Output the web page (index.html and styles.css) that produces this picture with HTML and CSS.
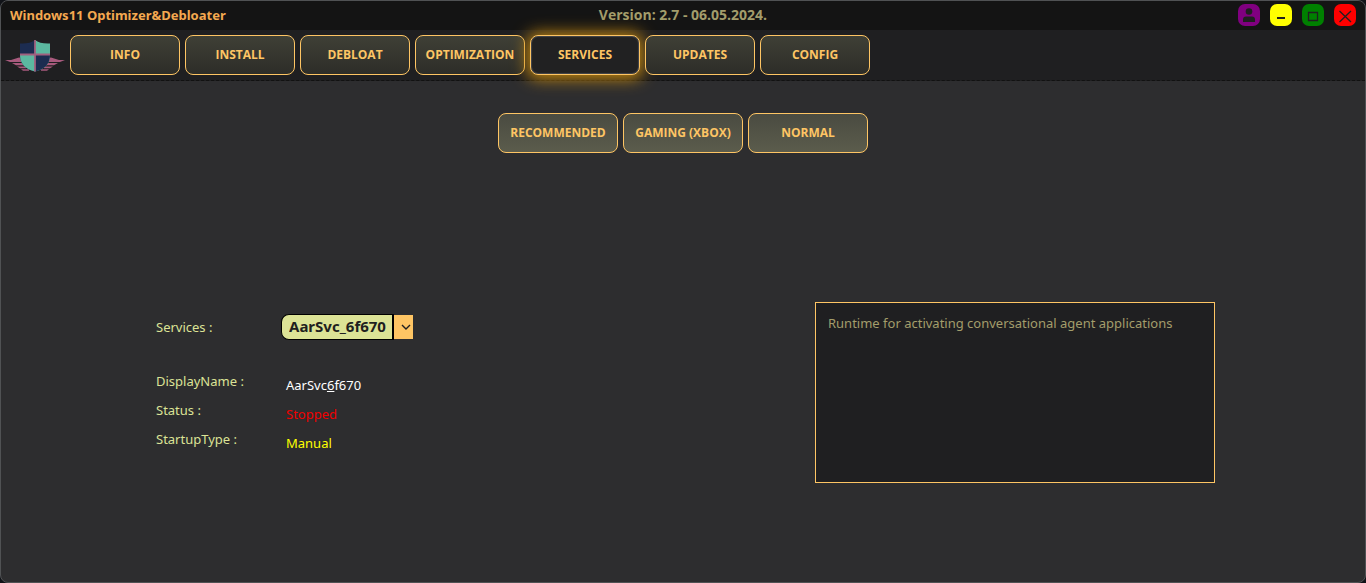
FILE: index.html
```html
<!DOCTYPE html>
<html lang="en">
<head>
<meta charset="utf-8">
<meta name="viewport" content="width=device-width, initial-scale=1">
<title>Windows11 Optimizer&amp;Debloater</title>
<link rel="stylesheet" href="styles.css">
</head>
<body>
<div class="window">
  <header class="titlebar">
    <h1 class="app-title">Windows11 Optimizer&amp;Debloater</h1>
    <p class="version">Version: 2.7 - 06.05.2024.</p>
    <div class="window-controls">
      <button class="control control-user" type="button" aria-label="Account">
        <svg viewBox="0 0 22 22" width="22" height="22"><circle cx="11" cy="7.5" r="3.3" fill="#1f1f20"/><path d="M5 18v-2.500Q5 12.500 8 12.500h6q3 0 3 3V18z" fill="#1f1f20"/></svg>
      </button>
      <button class="control control-minimize" type="button" aria-label="Minimize">
        <svg viewBox="0 0 22 22" width="22" height="22"><path d="M7 13h8v2H7z" fill="#1f1f20"/></svg>
      </button>
      <button class="control control-maximize" type="button" aria-label="Maximize">
        <svg viewBox="0 0 22 22" width="22" height="22"><path d="M6.500 8.500h9v8h-9z" fill="none" stroke="#1f1f20" stroke-width="1.300"/></svg>
      </button>
      <button class="control control-close" type="button" aria-label="Close">
        <svg viewBox="0 0 22 22" width="22" height="22"><path d="M5.500 7l11.500 11M17 7L5.500 18" fill="none" stroke="#1f1f20" stroke-width="1.300"/></svg>
      </button>
    </div>
  </header>

  <nav class="navbar" aria-label="Sections">
    <svg class="logo" viewBox="0 0 60 34" width="60" height="34" role="img" aria-label="Shield with wings">
      <g fill="#a85a7d">
        <path d="M0 22h6l8-2.500 5 1v3.500H5zM7 25h13v2.300H11zM12 28.400h9v1.900h-6zM16 31.200h8v1.600h-6z"/>
        <path d="M60 22h-6l-8-2.500-5 1v3.500h14zM53 25H40v2.300h9zM48 28.400h-9v1.900h6zM44 31.200h-8v1.600h6z"/>
      </g>
      <g transform="translate(0 2)">
        <path d="M30 0Q25 4 15 3.500V15q0 13 15 16.500z" fill="#1c2c50"/>
        <path d="M30 0q5 4 15 3.500V15q0 13-15 16.500z" fill="#5bb8a0"/>
        <path d="M15 15h15v16.500Q15 28 15 15z" fill="#5bb8a0"/>
        <path d="M45 15H30v16.500q15-3.500 15-16.500z" fill="#1c2c50"/>
        <path d="M30 0v31.500M15 14.500h30" stroke="#a0607f" stroke-width="1.800"/>
      </g>
    </svg>
    <button class="button" type="button">INFO</button>
    <button class="button" type="button">INSTALL</button>
    <button class="button" type="button">DEBLOAT</button>
    <button class="button" type="button">OPTIMIZATION</button>
    <button class="button button-active" type="button" aria-current="page">SERVICES</button>
    <button class="button" type="button">UPDATES</button>
    <button class="button" type="button">CONFIG</button>
  </nav>

  <main class="content">
    <div class="presets">
      <button class="button button-preset" type="button">RECOMMENDED</button>
      <button class="button button-preset" type="button">GAMING (XBOX)</button>
      <button class="button button-preset" type="button">NORMAL</button>
    </div>
    <section class="service">
      <div class="service-info">
        <div class="picker">
          <label class="label" for="service">Services :</label>
          <span class="combo">
            <select class="combo-select" id="service"><option>AarSvc_6f670</option></select>
            <span class="combo-arrow" aria-hidden="true"><svg viewBox="0 0 10 6" width="10" height="6"><path d="M1 1l4 4 4-4" fill="none" stroke="#1f1f20" stroke-width="1.400"/></svg></span>
          </span>
        </div>
        <div class="details">
          <dl class="facts">
            <dt class="label">DisplayName :</dt><dd class="value">AarSvc<u>6</u>f670</dd>
            <dt class="label">Status :</dt><dd class="value value-stopped">Stopped</dd>
            <dt class="label">StartupType :</dt><dd class="value value-manual">Manual</dd>
          </dl>
        </div>
      </div>
      <p class="description">Runtime for activating conversational agent applications</p>
    </section>
  </main>
</div>
</body>
</html>
```
FILE: styles.css
```css
* {
  box-sizing: border-box;
}

body {
  margin: 0;
  background: #111318;
  color: #dce396;
  font-family: "Noto Sans", "Open Sans", sans-serif;
  font-size: 13px;
  line-height: 20px;
}

h1, p, dl, dd {
  margin: 0;
}

button {
  padding: 0;
  font-family: inherit;
  cursor: pointer;
}

.window {
  display: flex;
  flex-direction: column;
  min-height: 100vh;
  border: 1px solid #505254;
  border-radius: 8px;
  background: #2d2d2f;
  overflow: hidden;
}

.titlebar {
  display: grid;
  grid-template-columns: 1fr auto 1fr;
  align-items: center;
  height: 29px;
  padding: 0 9px 1px;
  background: #141414;
}

.app-title {
  color: #f4a950;
  font-size: 13px;
  font-weight: 700;
}

.version {
  color: #a39d6b;
  font-family: "Open Sans", "Noto Sans", sans-serif;
  font-size: 14px;
  font-weight: 700;
}

.window-controls {
  display: flex;
  justify-content: flex-end;
  gap: 10px;
}

.control {
  width: 22px;
  height: 22px;
  border: 0;
  border-radius: 7px;
}

.control svg {
  display: block;
}

.control-user { background: #800080; }
.control-minimize { background: #ffff00; }
.control-maximize { background: #008000; }
.control-close { background: #ff0000; }

.navbar {
  display: flex;
  align-items: center;
  gap: 5px;
  height: 51px;
  padding: 0 4px;
  border-bottom: 1px dashed #111111;
  background: #1f1f21;
}

.logo {
  flex: none;
}

.button {
  width: 110px;
  height: 40px;
  padding-bottom: 2px;
  border: 1px solid #fec564;
  border-radius: 8px;
  background: linear-gradient(#3f4036, #2d2d28);
  color: #fec564;
  font-family: "Open Sans", "Noto Sans", sans-serif;
  font-size: 12px;
  font-weight: 700;
}

.button-active {
  background: #212122;
  box-shadow: 0 1px 16px 3px #c4880f, inset 0 0 1px 1px #45474c;
}

.button-preset {
  width: 120px;
  background: linear-gradient(#4a4b41, #5b5c4c);
}

.content {
  flex: 1;
  padding: 32px 150px;
}

.presets {
  display: flex;
  justify-content: center;
  gap: 5px;
}

.service {
  display: flex;
  justify-content: space-between;
  margin-top: 149px;
}

.service-info {
  padding: 12px 5px;
}

.picker {
  display: grid;
  grid-template-columns: 125px auto;
  align-items: center;
}

.combo {
  display: flex;
  align-items: center;
}

.combo-select {
  width: 113px;
  height: 26px;
  padding: 0 0 2px 7px;
  border: 1px solid #000000;
  border-right-width: 2px;
  border-radius: 8px 0 0 8px;
  background: #dce396;
  color: #1f1f20;
  font-family: inherit;
  font-size: 15px;
  font-weight: 700;
  appearance: none;
}

.combo-arrow {
  display: grid;
  place-items: center;
  width: 19px;
  height: 24px;
  padding-left: 4px;
  background: #fec564;
}

.details {
  padding-top: 31px;
}

.facts {
  display: grid;
  grid-template-columns: 130px auto;
  row-gap: 5px;
}

.value {
  padding-top: 4px;
  color: #ffffff;
}

.value-stopped { color: #f00000; }
.value-manual { color: #ffff00; }

.description {
  width: 400px;
  min-height: 181px;
  padding: 10px 12px;
  border: 1px solid #fec564;
  background: #1f1f21;
  color: #a39d6b;
}
```
